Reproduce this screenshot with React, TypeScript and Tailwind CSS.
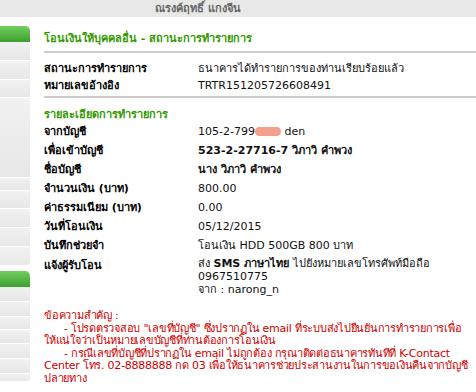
import type { ReactNode } from "react"

interface Row {
  label: string
  value: ReactNode
  bold?: boolean
}

const statusRows: Row[] = [
  { label: "สถานะการทำรายการ", value: "ธนาคารได้ทำรายการของท่านเรียบร้อยแล้ว" },
  { label: "หมายเลขอ้างอิง", value: "TRTR151205726608491" },
]

const detailRows: Row[] = [
  {
    label: "จากบัญชี",
    value: (
      <>
        105-2-799
        <span className="inline-block h-[9px] w-[26px] translate-y-[1px] rounded-full bg-[#f4a08c]"></span> den
      </>
    ),
  },
  { label: "เพื่อเข้าบัญชี", value: "523-2-27716-7 วิภาวิ คำพวง", bold: true },
  { label: "ชื่อบัญชี", value: "นาง วิภาวิ คำพวง", bold: true },
  { label: "จำนวนเงิน (บาท)", value: "800.00" },
  { label: "ค่าธรรมเนียม (บาท)", value: "0.00" },
  { label: "วันที่โอนเงิน", value: "05/12/2015" },
  { label: "บันทึกช่วยจำ", value: "โอนเงิน HDD 500GB 800 บาท" },
]

// note lines are broken where the bank page breaks them
const noteLines: { text: string; indent?: boolean }[] = [
  { text: "ข้อความสำคัญ :" },
  { text: '- โปรดตรวจสอบ "เลขที่บัญชี" ซึ่งปรากฏใน email ที่ระบบส่งไปยืนยันการทำรายการเพื่อ', indent: true },
  { text: "ให้แน่ใจว่าเป็นหมายเลขบัญชีที่ท่านต้องการโอนเงิน" },
  { text: "- กรณีเลขที่บัญชีที่ปรากฏใน email ไม่ถูกต้อง กรุณาติดต่อธนาคารทันทีที่ K-Contact", indent: true },
  { text: "Center โทร. 02-8888888 กด 03 เพื่อให้ธนาคารช่วยประสานงานในการขอเงินคืนจากบัญชี" },
  { text: "ปลายทาง" },
]

function SideGroup({ rows, last }: { rows: number[]; last: number }) {
  return (
    <div className="flex flex-col overflow-hidden rounded-r-[4px] bg-[#ececec]">
      <div className="h-[16px] rounded-tr-[5px] bg-gradient-to-b from-[#72cf5e] to-[#3d9f2e]"></div>
      {rows.map((h, i) => (
        <div key={i} style={{ height: h }} className="border-b border-white bg-gradient-to-b from-[#f1f1f1] to-[#e7e7e7]"></div>
      ))}
      <div style={{ height: last }} className="bg-gradient-to-b from-[#f1f1f1] to-[#e9e9e9]"></div>
    </div>
  )
}

function InfoRow({ row, h }: { row: Row; h: string }) {
  return (
    <div className={`flex items-center ${h}`}>
      <div className="w-[154px] shrink-0 font-bold text-black">{row.label}</div>
      <div className={`text-[#111] ${row.bold ? "font-bold" : ""}`}>{row.value}</div>
    </div>
  )
}

export default function App() {
  return (
    <div className="h-[392px] w-[476px] overflow-hidden bg-white text-[11px] leading-[13px] [font-family:Tahoma,'DejaVu_Sans','Noto_Sans',sans-serif]">
      <div className="flex h-[17px] items-center bg-[#e8e8e8] pl-[155px] font-bold text-[#666]">ณรงค์ฤทธิ์ แกงจีน</div>

      <div className="flex pt-[9px]">
        <div className="flex w-[30px] shrink-0 flex-col gap-[6px]">
          <SideGroup rows={[19, 19, 18, 80, 13, 18, 19, 19]} last={18} />
          <SideGroup rows={[15, 15, 13, 14, 15, 15]} last={7} />
        </div>

        <div className="ml-[14px] min-w-0 flex-1">
          <div className="flex h-[27px] items-center border-b-2 border-[#cccccc] font-bold text-[#339900]">
            โอนเงินให้บุคคลอื่น - สถานะการทำรายการ
          </div>
          <div className="border-b-2 border-[#cccccc] pt-[7px] pb-[2px]">
            {statusRows.map((r) => (
              <InfoRow key={r.label} row={r} h="h-[17px]" />
            ))}
          </div>

          <div className="flex h-[23px] items-end font-bold text-[#339900]">รายละเอียดการทำรายการ</div>
          <div className="pt-[1px]">
            {detailRows.map((r) => (
              <InfoRow key={r.label} row={r} h="h-[19px]" />
            ))}
            <div className="flex pt-[2px]">
              <div className="w-[154px] shrink-0 pt-[2px] font-bold text-black">แจ้งผู้รับโอน</div>
              <div className="text-[#111]">
                <div>
                  ส่ง <b>SMS ภาษาไทย</b> ไปยังหมายเลขโทรศัพท์มือถือ
                </div>
                <div>0967510775</div>
                <div>จาก : narong_n</div>
              </div>
            </div>
          </div>

          <div className="mt-[14px] text-[#cc0000] leading-[12.6px] tracking-[-0.25px]">
            {noteLines.map((l, i) => (
              <div key={i} className={`whitespace-nowrap ${l.indent ? "pl-[20px]" : ""}`}>
                {l.text}
              </div>
            ))}
          </div>
        </div>
      </div>
    </div>
  )
}
